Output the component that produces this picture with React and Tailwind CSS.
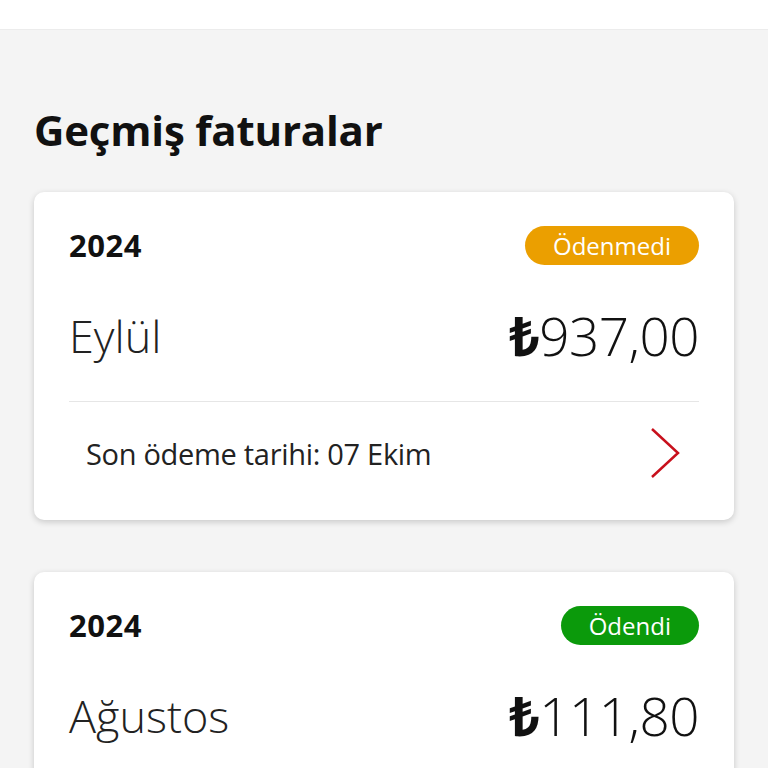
const FONT = { fontFamily: '"Open Sans", "Noto Sans", "Liberation Sans", sans-serif' };

function Chevron() {
  return (
    <svg width="32" height="52" viewBox="0 0 32 52" fill="none">
      <path d="M3 2 L29 26 L3 50" stroke="#c8101c" strokeWidth="2.5" strokeLinejoin="miter" />
    </svg>
  );
}

function BillCard({ year, status, paid, month, amount, due }) {
  return (
    <div className="bg-white rounded-[10px] shadow-[0_2px_6px_rgba(0,0,0,0.18)] px-[35px]">
      <div className="flex items-center justify-between pt-[34px]">
        <span className="text-[31px] font-bold text-[#111] leading-none tracking-[0.5px]">{year}</span>
        <span
          className={`rounded-full px-[28px] h-[39px] flex items-center text-[24px] text-white leading-none ${paid ? 'bg-[#0b9a0b]' : 'bg-[#eb9f00]'}`}
        >
          {status}
        </span>
      </div>
      <div className="flex items-center justify-between mt-[45px] pb-[41px] h-[50px] box-content">
        <span className="text-[45px] font-light text-[#222] leading-none">{month}</span>
        <span className="text-[53px] font-light text-[#111] leading-none tracking-[-0.5px]">
          <span className="font-bold">₺</span>{amount}
        </span>
      </div>
      {due && (
        <>
          <div className="h-px bg-[#e6e6e6]" />
          <div className="flex items-center justify-between pl-[17px] pr-[18px] pb-[16px] h-[118px]">
            <span className="text-[29px] text-[#222] leading-none tracking-[-0.3px]">{due}</span>
            <Chevron />
          </div>
        </>
      )}
    </div>
  );
}

export default function App() {
  return (
    <div className="w-[768px] h-[768px] overflow-hidden bg-[#f4f4f4]" style={FONT}>
      <div className="h-[30px] bg-white border-b border-[#ececec]" />
      <div className="px-[34px]">
        <h1 className="text-[42px] font-bold text-[#111] leading-none mt-[79px] mb-[41px] tracking-[-0.2px]">
          Geçmiş faturalar
        </h1>
        <div className="flex flex-col gap-[52px]">
          <BillCard year="2024" status="Ödenmedi" month="Eylül" amount="937,00" due="Son ödeme tarihi: 07 Ekim" />
          <BillCard year="2024" status="Ödendi" paid month="Ağustos" amount="111,80" due="Son ödeme tarihi: 07 Eylül" />
        </div>
      </div>
    </div>
  );
}
